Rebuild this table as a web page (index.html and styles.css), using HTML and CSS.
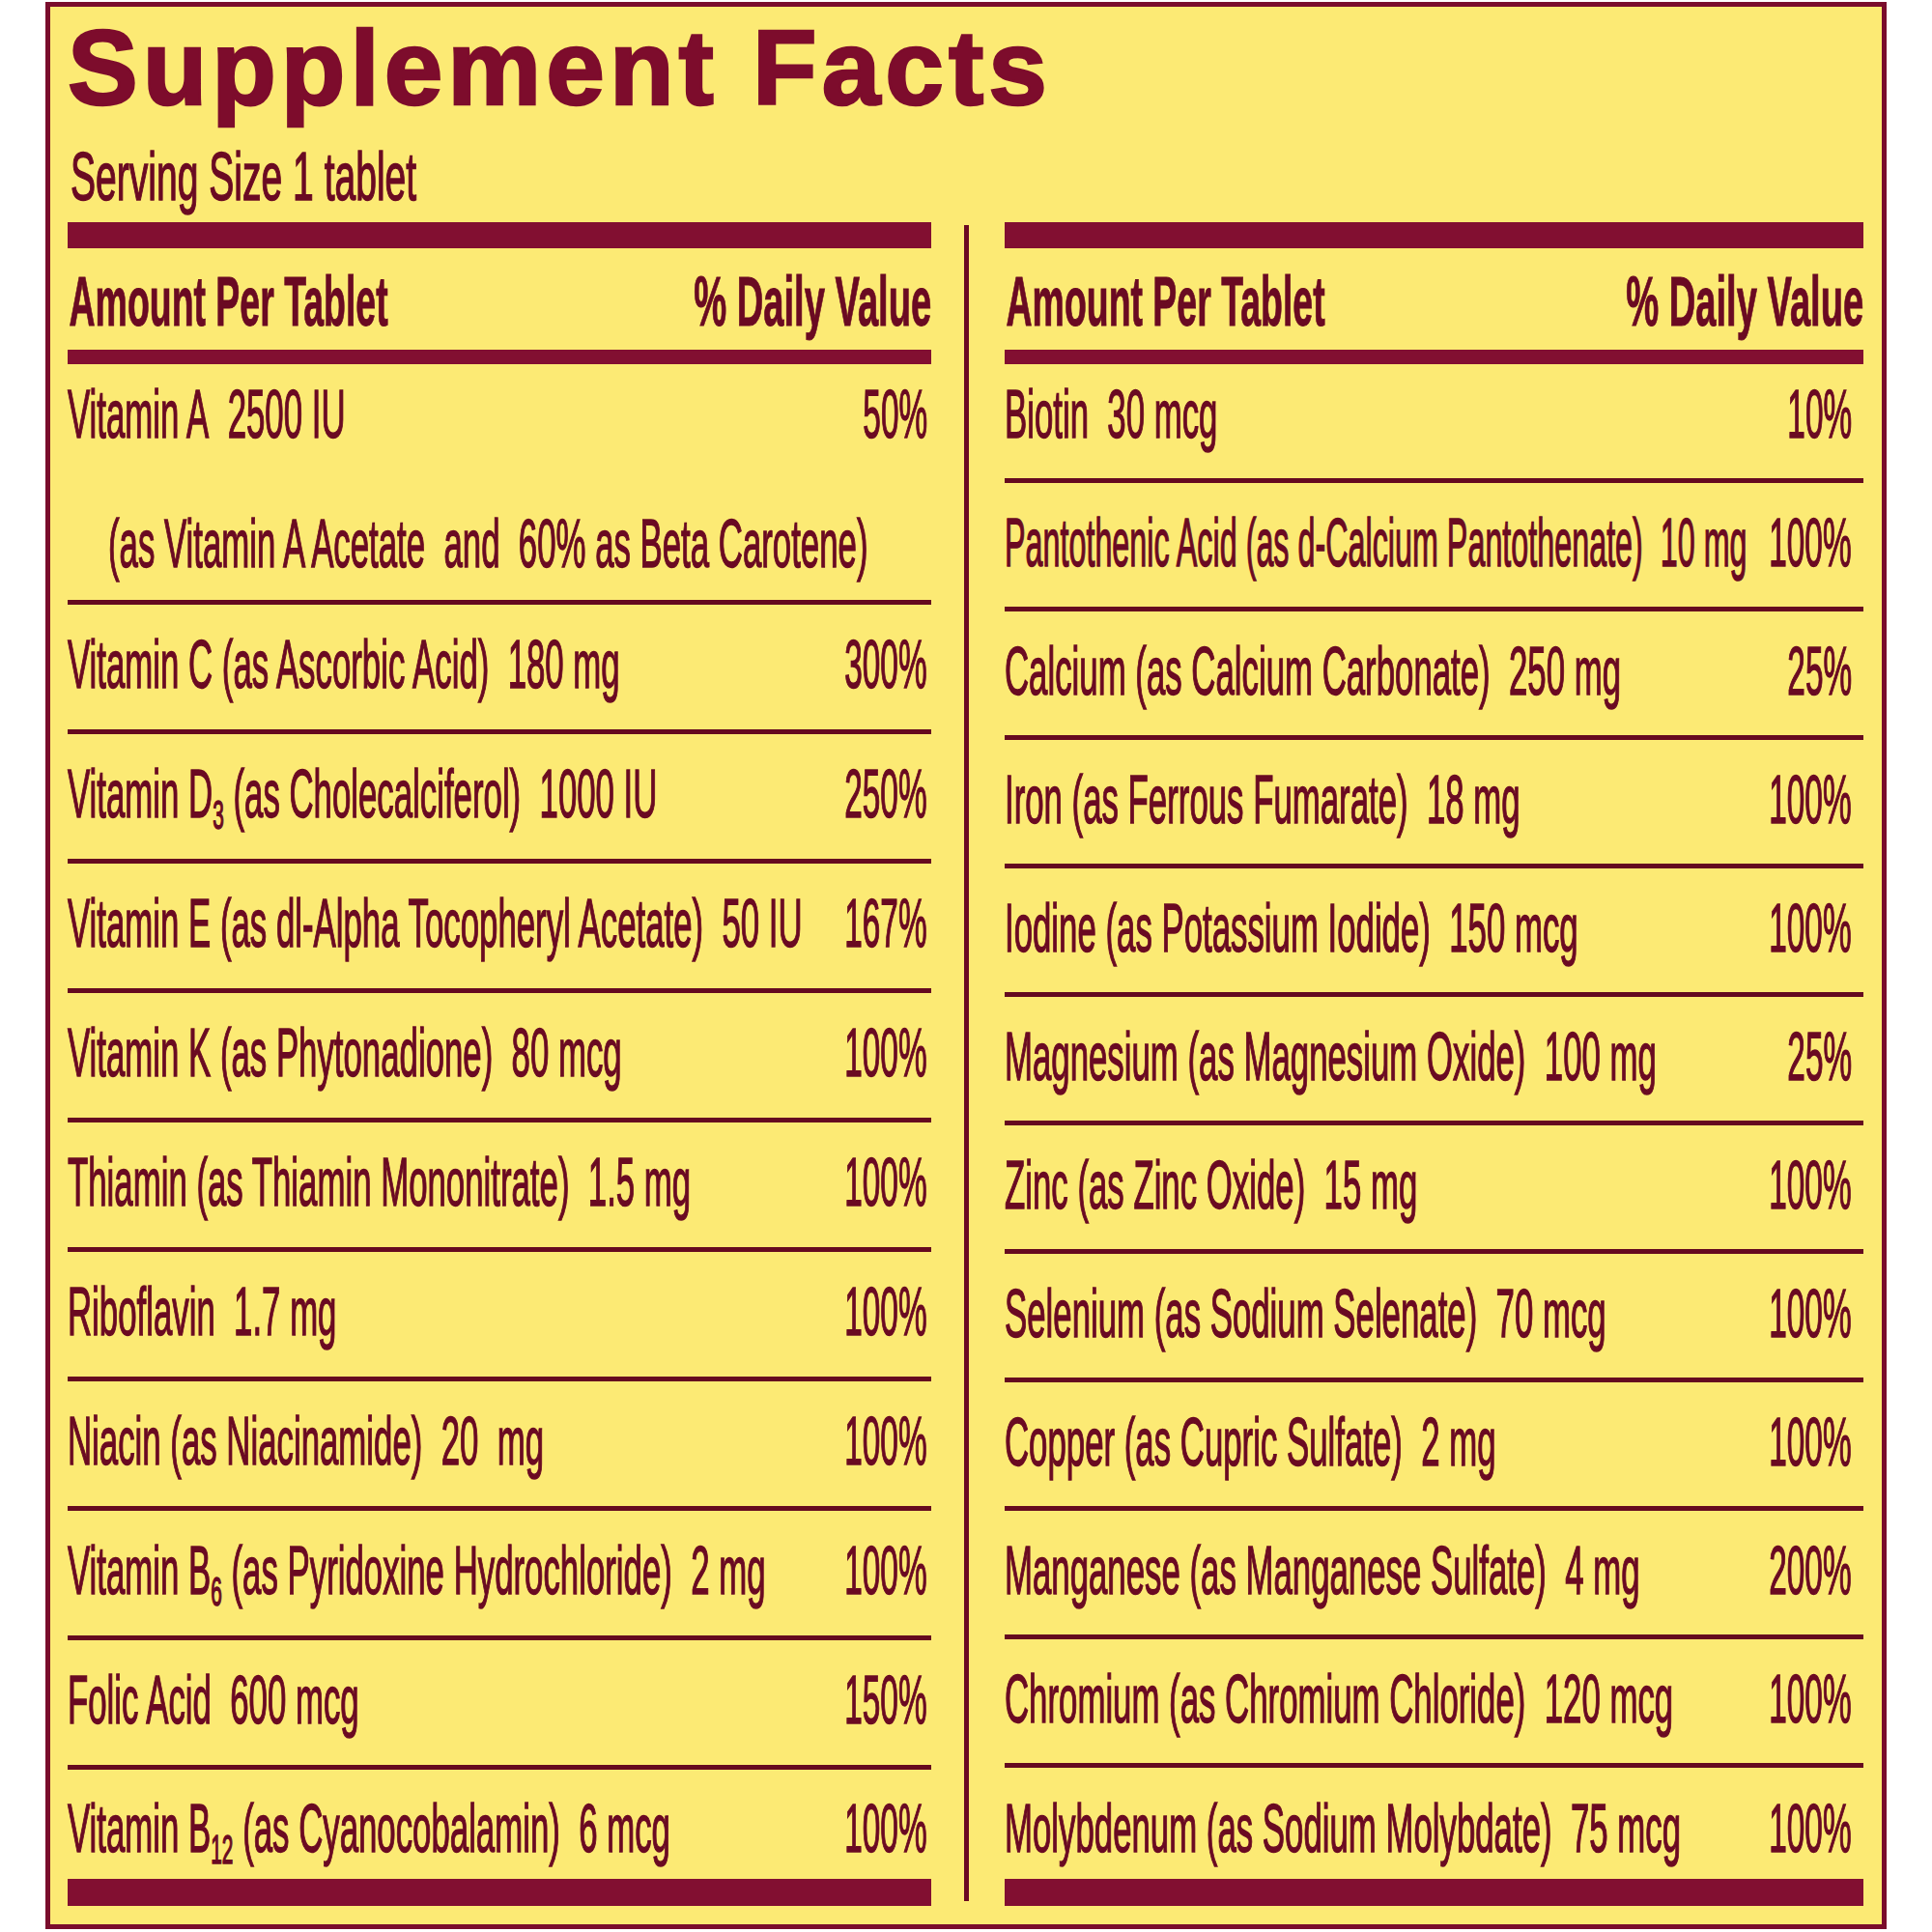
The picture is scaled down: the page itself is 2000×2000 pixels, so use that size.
FILE: index.html
```html
<!DOCTYPE html>
<html lang="en">
<head>
<meta charset="utf-8">
<title>Supplement Facts</title>
<link rel="stylesheet" href="styles.css">
</head>
<body>
<div class="label">
  <h1 class="title">Supplement Facts</h1>
  <div class="serving"><span class="sv">Serving Size 1 tablet</span></div>
  <div class="cols">
    <div class="col left">
      <div class="bar top"></div>
      <div class="head"><span class="hn">Amount Per Tablet</span><span class="hv">% Daily Value</span></div>
      <div class="bar mid"></div>
      <div class="row first">
        <div class="line"><span class="n">Vitamin A&nbsp; 2500 IU</span><span class="v">50%</span></div>
        <div class="line sub"><span class="n">(as Vitamin A Acetate&nbsp; and&nbsp; 60% as Beta Carotene)</span></div>
      </div>
      <div class="row"><div class="line"><span class="n">Vitamin C (as Ascorbic Acid)&nbsp; 180 mg</span><span class="v">300%</span></div></div>
      <div class="row"><div class="line"><span class="n">Vitamin D<sub>3</sub> (as Cholecalciferol)&nbsp; 1000 IU</span><span class="v">250%</span></div></div>
      <div class="row"><div class="line"><span class="n">Vitamin E (as dl-Alpha Tocopheryl Acetate)&nbsp; 50 IU</span><span class="v">167%</span></div></div>
      <div class="row"><div class="line"><span class="n">Vitamin K (as Phytonadione)&nbsp; 80 mcg</span><span class="v">100%</span></div></div>
      <div class="row"><div class="line"><span class="n">Thiamin (as Thiamin Mononitrate)&nbsp; 1.5 mg</span><span class="v">100%</span></div></div>
      <div class="row"><div class="line"><span class="n">Riboflavin&nbsp; 1.7 mg</span><span class="v">100%</span></div></div>
      <div class="row"><div class="line"><span class="n">Niacin (as Niacinamide)&nbsp; 20&nbsp; mg</span><span class="v">100%</span></div></div>
      <div class="row"><div class="line"><span class="n">Vitamin B<sub>6</sub> (as Pyridoxine Hydrochloride)&nbsp; 2 mg</span><span class="v">100%</span></div></div>
      <div class="row"><div class="line"><span class="n">Folic Acid&nbsp; 600 mcg</span><span class="v">150%</span></div></div>
      <div class="row last"><div class="line"><span class="n">Vitamin B<sub>12</sub> (as Cyanocobalamin)&nbsp; 6 mcg</span><span class="v">100%</span></div></div>
      <div class="bar foot"></div>
    </div>
    <div class="divider"></div>
    <div class="col right">
      <div class="bar top"></div>
      <div class="head"><span class="hn">Amount Per Tablet</span><span class="hv">% Daily Value</span></div>
      <div class="bar mid"></div>
      <div class="row first"><div class="line"><span class="n">Biotin&nbsp; 30 mcg</span><span class="v">10%</span></div></div>
      <div class="row"><div class="line"><span class="n tight">Pantothenic Acid (as d-Calcium Pantothenate)&nbsp; 10 mg</span><span class="v">100%</span></div></div>
      <div class="row"><div class="line"><span class="n">Calcium (as Calcium Carbonate)&nbsp; 250 mg</span><span class="v">25%</span></div></div>
      <div class="row"><div class="line"><span class="n">Iron (as Ferrous Fumarate)&nbsp; 18 mg</span><span class="v">100%</span></div></div>
      <div class="row"><div class="line"><span class="n">Iodine (as Potassium Iodide)&nbsp; 150 mcg</span><span class="v">100%</span></div></div>
      <div class="row"><div class="line"><span class="n">Magnesium (as Magnesium Oxide)&nbsp; 100 mg</span><span class="v">25%</span></div></div>
      <div class="row"><div class="line"><span class="n">Zinc (as Zinc Oxide)&nbsp; 15 mg</span><span class="v">100%</span></div></div>
      <div class="row"><div class="line"><span class="n">Selenium (as Sodium Selenate)&nbsp; 70 mcg</span><span class="v">100%</span></div></div>
      <div class="row"><div class="line"><span class="n">Copper (as Cupric Sulfate)&nbsp; 2 mg</span><span class="v">100%</span></div></div>
      <div class="row"><div class="line"><span class="n">Manganese (as Manganese Sulfate)&nbsp; 4 mg</span><span class="v">200%</span></div></div>
      <div class="row"><div class="line"><span class="n">Chromium (as Chromium Chloride)&nbsp; 120 mcg</span><span class="v">100%</span></div></div>
      <div class="row last"><div class="line"><span class="n">Molybdenum (as Sodium Molybdate)&nbsp; 75 mcg</span><span class="v">100%</span></div></div>
      <div class="bar foot"></div>
    </div>
  </div>
</div>
</body>
</html>
```

FILE: styles.css
```css
html, body {
  margin: 0;
  padding: 0;
  background: #ffffff;
}

body {
  font-family: "Liberation Sans", Arial, sans-serif;
  color: #6a0a22;
}

.label {
  box-sizing: border-box;
  width: 1906px;
  height: 1995px;
  margin: 2px 0 0 47px;
  border: 5px solid #7a0d2c;
  background: #fcea74;
  padding: 9px 19px 0 18px;
  overflow: hidden;
}

.title {
  margin: 0;
  font-size: 109px;
  line-height: 109px;
  font-weight: bold;
  letter-spacing: 5px;
  color: #7d0c2c;
  white-space: nowrap;
  -webkit-text-stroke: 2.5px #7d0c2c;
}

.serving {
  margin-top: 22px;
  height: 71px;
  font-size: 71px;
  line-height: 71px;
  padding-left: 3px;
}

.sv {
  display: inline-block;
  white-space: nowrap;
  transform: scaleX(0.55);
  transform-origin: left center;
  -webkit-text-stroke: 1.5px #6a0a22;
}

.cols {
  display: flex;
  margin-top: 12px;
}

.col {
  min-width: 0;
  overflow: visible;
}

.col.left {
  flex: 0 0 894px;
  width: 894px;
}

.col.right {
  flex: 0 0 889px;
  width: 889px;
  margin-left: 37px;
}

.divider {
  flex: 0 0 5px;
  margin: 3px 0 5px 34px;
  background: #6a0a22;
}

.bar {
  background: #820f31;
}

.bar.top {
  height: 27px;
}

.bar.mid {
  height: 15px;
}

.bar.foot {
  height: 28px;
}

.head {
  display: flex;
  justify-content: space-between;
  padding: 19px 0 14px 0;
  font-size: 72px;
  line-height: 72px;
  font-weight: bold;
  white-space: nowrap;
}

.hn {
  flex: 1 1 0;
  min-width: 0;
  padding-left: 3px;
  transform: scaleX(0.52);
  transform-origin: left center;
  -webkit-text-stroke: 1px #6a0a22;
}

.hv {
  flex: 0 0 auto;
  transform: scaleX(0.53);
  transform-origin: right center;
  -webkit-text-stroke: 1px #6a0a22;
}

.row {
  font-size: 71px;
  line-height: 71px;
  border-bottom: 5px solid #650a1f;
}

.left .row {
  padding: 26px 4px 32px 0;
}

.right .row {
  padding: 26px 12px 31px 0;
}

.left .row.first {
  padding-top: 16px;
  padding-bottom: 23px;
}

.right .row.first {
  padding-top: 16px;
}

.left .row.last {
  padding-top: 25px;
  padding-bottom: 17px;
  border-bottom: none;
}

.right .row.last {
  padding-top: 27px;
  padding-bottom: 17px;
  border-bottom: none;
}

.line {
  display: flex;
  justify-content: space-between;
  white-space: nowrap;
  height: 71px;
  min-width: 0;
}

.line.sub {
  margin-top: 63px;
  padding-left: 42px;
}

.n {
  flex: 1 1 0;
  min-width: 0;
  transform: scaleX(0.49);
  transform-origin: left center;
  -webkit-text-stroke: 1.5px #6a0a22;
}

.n.tight {
  transform: scaleX(0.455);
}

.v {
  flex: 0 0 auto;
  transform: scaleX(0.47);
  transform-origin: right center;
  -webkit-text-stroke: 1.5px #6a0a22;
}

sub {
  font-size: 0.6em;
  line-height: 0;
  vertical-align: -0.28em;
}
```
